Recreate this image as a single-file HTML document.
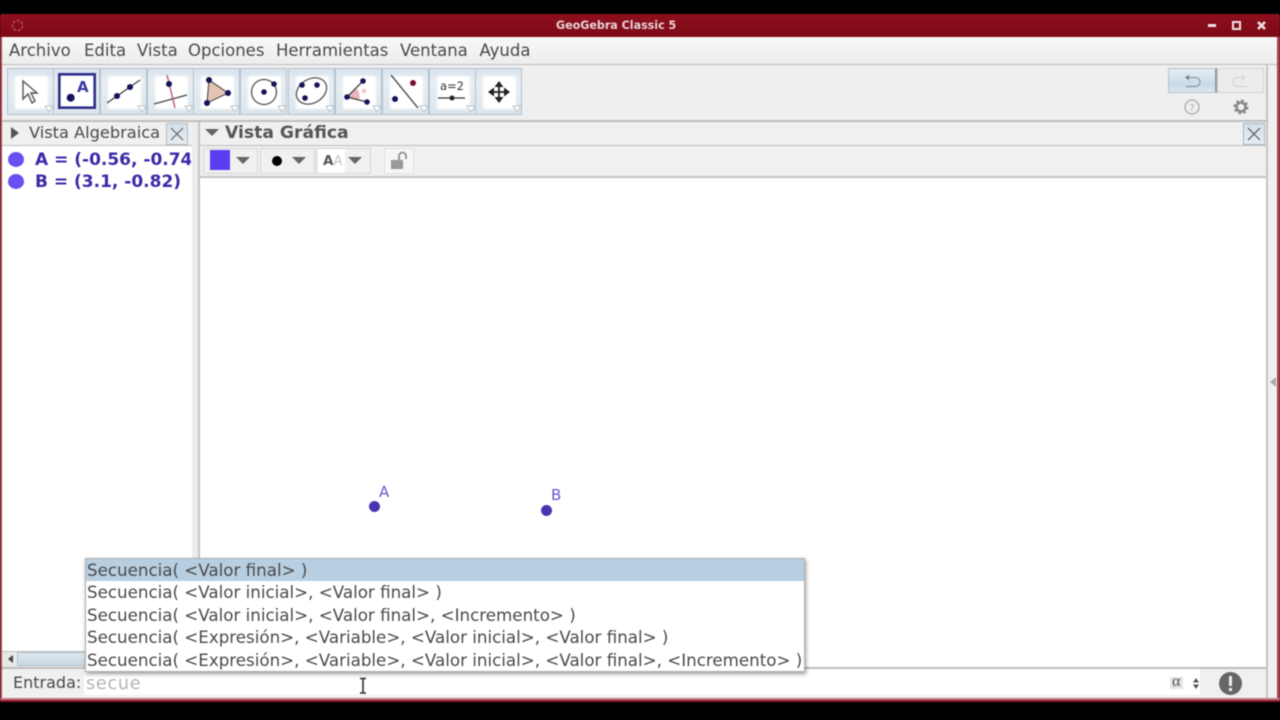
<!DOCTYPE html>
<html><head><meta charset="utf-8"><style>
html,body{margin:0;padding:0;width:1280px;height:720px;overflow:hidden;background:#000}
*{box-sizing:border-box}
#w{position:absolute;left:0;top:0;width:1280px;height:720px;filter:blur(.45px)}
.a{position:absolute}
.t{position:absolute;white-space:pre;font-family:"DejaVu Sans",sans-serif;color:#4a4a4a;line-height:1}
.btn{position:absolute;top:68px;width:47px;height:47px;background:linear-gradient(#d8e3ec,#e8eef3 30%,#dbe5ec);border:1px solid #b4c2cd}
.btn i{position:absolute;left:7px;top:7px;width:33px;height:33px;background:#fff;filter:blur(1px)}
.btn svg{position:absolute;left:0;top:0}
.s{position:absolute;left:87px;font:16.7px "DejaVu Sans",sans-serif;color:#4a4a4a;white-space:pre;line-height:1}
.m{font-size:16.5px;top:43px}
</style></head><body><div id="w">
<div class="a" style="left:0;top:14px;width:1280px;height:688px;background:#efefef;border-radius:3px 3px 0 0;overflow:hidden">
<div class="a" style="left:0;top:0;width:1280px;height:23px;background:linear-gradient(#8e0f1e,#7e0a17)"></div>
</div>
<div class="a" style="left:0;top:37px;width:2px;height:663px;background:#a8434e"></div>
<div class="a" style="left:1277px;top:37px;width:3px;height:663px;background:#a8434e"></div>
<div class="a" style="left:0;top:698px;width:1280px;height:2px;background:#c77a86"></div>
<div class="a" style="left:0;top:700px;width:1280px;height:2px;background:#8a1a2a"></div>
<svg class="a" style="left:10px;top:18px" width="16" height="16"><circle cx="7.500" cy="7.500" r="5" fill="none" stroke="#b45a68" stroke-width="1.3" stroke-dasharray="3 1.5"/></svg>
<div class="t" style="left:556px;top:20px;font-size:11.1px;font-weight:bold;color:#e9d3d5">GeoGebra Classic 5</div>
<div class="a" style="left:1208px;top:24px;width:8px;height:3px;background:#f0e0e2"></div>
<div class="a" style="left:1232px;top:21px;width:9px;height:9px;border:2.5px solid #f0e0e2"></div>
<svg class="a" style="left:1256px;top:20px" width="11" height="11"><path d="M2 2L9 9M9 2L2 9" stroke="#f0e0e2" stroke-width="2.6"/></svg>
<div class="a" style="left:2px;top:37px;width:1275px;height:28px;background:linear-gradient(#f8f8f8,#ededed);border-bottom:1px solid #bcbcbc"></div>
<div class="t m" style="left:9px">Archivo</div>
<div class="t m" style="left:84px">Edita</div>
<div class="t m" style="left:137px">Vista</div>
<div class="t m" style="left:188px">Opciones</div>
<div class="t m" style="left:276px">Herramientas</div>
<div class="t m" style="left:400px">Ventana</div>
<div class="t m" style="left:479.500px">Ayuda</div>

<div class="btn" style="left:7px"><i></i><svg width="47" height="47"><path d="M15 12V30L20 25L24 34L27 32L23 24H29Z" fill="#fff" stroke="#555" stroke-width="1.4"/><path d="M37 37h8l-4 6z" fill="#fff" stroke="#b8c4cc"/></svg></div>
<div class="btn" style="left:53px"><i></i><svg width="47" height="47"><rect x="5.300" y="5.300" width="35.400" height="33.400" fill="#fff" stroke="#2e2e8c" stroke-width="2.600"/><circle cx="16.700" cy="28.700" r="4" fill="#14145a"/><text x="23" y="23" font-family="DejaVu Sans" font-size="15" font-weight="bold" fill="#3a3aa0">A</text></svg></div>
<div class="btn" style="left:100px"><i></i><svg width="47" height="47"><path d="M6 34L39 11" stroke="#444" stroke-width="1.3"/><circle cx="16" cy="27" r="3" fill="#14145a"/><circle cx="29" cy="18" r="3" fill="#14145a"/><path d="M37 37h8l-4 6z" fill="#fff" stroke="#b8c4cc"/></svg></div>
<div class="btn" style="left:147px"><i></i><svg width="47" height="47"><path d="M6 35L39 26" stroke="#444" stroke-width="1.2"/><path d="M19 6L27 39" stroke="#c05a68" stroke-width="1.4"/><circle cx="21" cy="15" r="3" fill="#14145a"/><path d="M37 37h8l-4 6z" fill="#fff" stroke="#b8c4cc"/></svg></div>
<div class="btn" style="left:193px"><i></i><svg width="47" height="47"><path d="M15 11L13 34L34 24Z" fill="#e6c4b4" stroke="#555" stroke-width="1.2"/><circle cx="15" cy="11" r="3" fill="#14145a"/><circle cx="13" cy="34" r="3" fill="#14145a"/><circle cx="34" cy="24" r="3" fill="#14145a"/><path d="M37 37h8l-4 6z" fill="#fff" stroke="#b8c4cc"/></svg></div>
<div class="btn" style="left:240px"><i></i><svg width="47" height="47"><circle cx="23" cy="23" r="12.500" fill="none" stroke="#555" stroke-width="1.3"/><circle cx="23" cy="23" r="2.800" fill="#14145a"/><circle cx="33" cy="15" r="2.800" fill="#14145a"/><path d="M37 37h8l-4 6z" fill="#fff" stroke="#b8c4cc"/></svg></div>
<div class="btn" style="left:288px"><i></i><svg width="47" height="47"><ellipse cx="22.500" cy="22" rx="16" ry="12" transform="rotate(-30 22.500 22)" fill="none" stroke="#555" stroke-width="1.3"/><circle cx="13" cy="16" r="2.800" fill="#14145a"/><circle cx="28" cy="16" r="2.800" fill="#14145a"/><circle cx="16" cy="29" r="2.800" fill="#14145a"/><path d="M37 37h8l-4 6z" fill="#fff" stroke="#b8c4cc"/></svg></div>
<div class="btn" style="left:335px"><i></i><svg width="47" height="47"><path d="M11 28L20 19A11 11 0 0 1 23 31Z" fill="#eeb4bc"/><path d="M27 12L11 28L31 33" fill="none" stroke="#444" stroke-width="1.3"/><circle cx="27" cy="12" r="2.800" fill="#14145a"/><circle cx="11" cy="28" r="2.800" fill="#14145a"/><circle cx="31" cy="33" r="2.800" fill="#14145a"/><circle cx="28" cy="22" r="2.400" fill="#f4c8ce"/><path d="M37 37h8l-4 6z" fill="#fff" stroke="#b8c4cc"/></svg></div>
<div class="btn" style="left:382px"><i></i><svg width="47" height="47"><path d="M8 6L35 39" stroke="#555" stroke-width="1.400"/><circle cx="30" cy="14" r="3" fill="#7a1030"/><circle cx="12" cy="30" r="3" fill="#14145a"/><path d="M37 37h8l-4 6z" fill="#fff" stroke="#b8c4cc"/></svg></div>
<div class="btn" style="left:429px"><i></i><svg width="47" height="47"><text x="10" y="21" font-family="DejaVu Sans" font-size="11.500" fill="#333">a=2</text><path d="M8 29H35" stroke="#333" stroke-width="1.200"/><circle cx="22" cy="29" r="2.500" fill="#222"/><path d="M37 37h8l-4 6z" fill="#fff" stroke="#b8c4cc"/></svg></div>
<div class="btn" style="left:475px"><i></i><svg width="47" height="47"><path d="M23 17V29M17 23H29" stroke="#222" stroke-width="1.800"/><path d="M23 12l-4.500 6h9zM23 34l-4.500-6h9zM12 23l6-4.500v9zM34 23l-6-4.500v9z" fill="#222"/><path d="M37 37h8l-4 6z" fill="#fff" stroke="#b8c4cc"/></svg></div>

<div class="a" style="left:1168px;top:68px;width:49px;height:25px;background:linear-gradient(#e4edf4,#c9dbe8 70%,#dbe7ef);border:1px solid #b4c2cd;border-right:2px solid #8a9aa6"></div>
<div class="a" style="left:1217px;top:68px;width:47px;height:25px;background:#ececec;border:1px solid #d4d4d4"></div>
<svg class="a" style="left:1180px;top:72px" width="80" height="18"><path d="M7 5.500H15.500A4.500 4.500 0 0 1 15.500 14.500H6" fill="none" stroke="#8a96a0" stroke-width="1.200"/><path d="M9 2.500L5 5.500L9 8.500Z" fill="#7a868f"/><path d="M63 5.500H57.500A4.500 4.500 0 0 0 57.500 14.500H67" fill="none" stroke="#d4d4d4" stroke-width="1.200"/><path d="M62 2.500L66 5.500L62 8.500Z" fill="#d8d8d8"/></svg>
<svg class="a" style="left:1182px;top:97px" width="20" height="20"><circle cx="10" cy="10" r="7" fill="none" stroke="#aaa" stroke-width="1.300"/><text x="10" y="14" text-anchor="middle" font-family="DejaVu Sans" font-size="10" fill="#aaa">?</text></svg>
<svg class="a" style="left:1232px;top:98px" width="18" height="18"><circle cx="9" cy="9" r="4.500" fill="none" stroke="#888" stroke-width="2.500"/><circle cx="9" cy="9" r="6.500" fill="none" stroke="#888" stroke-width="2" stroke-dasharray="2.500 2.600"/></svg>

<div class="a" style="left:2px;top:120px;width:1275px;height:2px;background:#bdbdbd"></div>
<div class="a" style="left:1266px;top:65px;width:2px;height:633px;background:#c4c4c4"></div>
<div class="a" style="left:2px;top:122px;width:190px;height:24px;background:#f0f0f0;border-bottom:1px solid #c0c0c0"></div>
<div class="a" style="left:2px;top:146px;width:190px;height:521px;background:#fff"></div>
<div class="a" style="left:192px;top:122px;width:7px;height:545px;background:#ececec"></div>
<div class="a" style="left:198px;top:122px;width:2px;height:545px;background:#c4c4c4"></div>
<div class="a" style="left:11px;top:127px;width:0;height:0;border-left:8px solid #555;border-top:6px solid transparent;border-bottom:6px solid transparent"></div>
<div class="t" style="left:29px;top:125px;font-size:16.200px">Vista Algebraica</div>
<div class="a" style="left:166px;top:123px;width:22px;height:22px;background:linear-gradient(#d4e0ea,#e6edf2);border:1px solid #b0bcc6"></div>
<svg class="a" style="left:166px;top:123px" width="22" height="22"><path d="M5 5L17 17M17 5L5 17" stroke="#666" stroke-width="1.200"/></svg>
<div class="a" style="left:8px;top:152px;width:16px;height:15px;border-radius:50%;background:#6a4ff0"></div>
<div class="a" style="left:8px;top:174px;width:16px;height:15px;border-radius:50%;background:#6a4ff0"></div>
<div class="a" style="left:2px;top:146px;width:189px;height:60px;overflow:hidden">
<div class="t" style="left:33px;top:6px;font-size:17px;font-weight:bold;color:#3a2aa8">A = (-0.56, -0.74)</div>
<div class="t" style="left:33px;top:28px;font-size:17px;font-weight:bold;color:#3a2aa8">B = (3.1, -0.82)</div>
</div>

<div class="a" style="left:200px;top:122px;width:1066px;height:24px;background:#f0f0f0;border-bottom:1px solid #bcbcbc"></div>
<div class="a" style="left:205px;top:129px;width:0;height:0;border-top:7px solid #666;border-left:7px solid transparent;border-right:7px solid transparent"></div>
<div class="t" style="left:225px;top:125px;font-size:17.200px;font-weight:bold;color:#555">Vista Gráfica</div>
<div class="a" style="left:1243px;top:123px;width:22px;height:22px;background:linear-gradient(#d4e0ea,#e6edf2);border:1px solid #a8b6c2"></div>
<svg class="a" style="left:1243px;top:123px" width="22" height="22"><path d="M5 5L17 17M17 5L5 17" stroke="#555" stroke-width="1.200"/></svg>

<div class="a" style="left:200px;top:146px;width:1066px;height:32px;background:#f0f0f0;border-bottom:2px solid #c4c4c4"></div>
<div class="a" style="left:203px;top:148px;width:55px;height:26px;border:1px solid #d6d6d6"></div>
<div class="a" style="left:260px;top:148px;width:55px;height:26px;border:1px solid #d6d6d6"></div>
<div class="a" style="left:316px;top:148px;width:55px;height:26px;border:1px solid #d6d6d6"></div>
<div class="a" style="left:384px;top:148px;width:30px;height:26px;border:1px solid #e0e0e0;background:#f6f6f6"></div>
<div class="a" style="left:210px;top:150px;width:20px;height:20px;background:#5a3df0"></div>
<div class="a" style="left:236px;top:157px;width:0;height:0;border-top:7px solid #666;border-left:7px solid transparent;border-right:7px solid transparent"></div>
<div class="a" style="left:272px;top:156px;width:10px;height:10px;border-radius:50%;background:#000"></div>
<div class="a" style="left:292px;top:157px;width:0;height:0;border-top:7px solid #666;border-left:7px solid transparent;border-right:7px solid transparent"></div>
<div class="a" style="left:318px;top:149px;width:27px;height:24px;background:#fff"></div>
<div class="t" style="left:323px;top:155px;font-size:13.500px;font-weight:bold;color:#555">A<span style="font-size:13px;color:#c4c4c4;font-weight:normal">A</span></div>
<div class="a" style="left:348px;top:157px;width:0;height:0;border-top:7px solid #666;border-left:7px solid transparent;border-right:7px solid transparent"></div>
<svg class="a" style="left:390px;top:151px" width="20" height="20"><rect x="1" y="9" width="12" height="9" fill="#999"/><path d="M9 9V5A3.500 3.500 0 0 1 16 5V8" fill="none" stroke="#999" stroke-width="2"/></svg>

<div class="a" style="left:200px;top:178px;width:1066px;height:489px;background:#fff"></div>
<div class="a" style="left:1268px;top:65px;width:9px;height:633px;background:#f0f0f0"></div>
<div class="a" style="left:1270px;top:377px;width:0;height:0;border-right:6px solid #aaa;border-top:5px solid transparent;border-bottom:5px solid transparent"></div>
<div class="a" style="left:369px;top:501px;width:11px;height:11px;border-radius:50%;background:#4a33b4"></div>
<div class="a" style="left:541px;top:505px;width:11px;height:11px;border-radius:50%;background:#4a33b4"></div>
<div class="t" style="left:379px;top:485px;font-size:15px;color:#6a55cc">A</div>
<div class="t" style="left:551px;top:488px;font-size:15px;color:#6a55cc">B</div>

<div class="a" style="left:2px;top:651px;width:190px;height:16px;background:#e8e8e8;border-top:1px solid #c0c0c0"></div>
<div class="a" style="left:17px;top:652px;width:70px;height:14px;background:linear-gradient(#dde8f0,#c8d8e4);border:1px solid #b4c0ca"></div>
<div class="a" style="left:8px;top:655px;width:0;height:0;border-right:5px solid #444;border-top:4px solid transparent;border-bottom:4px solid transparent"></div>
<div class="a" style="left:2px;top:667px;width:1264px;height:2px;background:#bcbcbc"></div>
<div class="a" style="left:2px;top:669px;width:1264px;height:29px;background:#f0f0f0"></div>
<div class="a" style="left:84px;top:669px;width:1116px;height:26px;background:#fff"></div>
<div class="t" style="left:13px;top:675px;font-size:16px">Entrada:</div>
<div class="t" style="left:86px;top:676px;font-size:17.500px;letter-spacing:.8px;color:#b4b4b4">secue</div>
<svg class="a" style="left:358px;top:677px" width="10" height="18"><path d="M2 1.500H8M5 1.500V16M2 16H8" stroke="#444" stroke-width="1.800" fill="none"/></svg>
<div class="a" style="left:1170px;top:677px;width:13px;height:12px;background:#e4e4e4"></div>
<div class="t" style="left:1172px;top:674px;font-size:16px;font-family:'Liberation Serif',serif;color:#555">α</div>
<svg class="a" style="left:1191px;top:677px" width="9" height="13"><path d="M5 1L8 5.500H2zM5 12L8 7.500H2z" fill="#555"/></svg>
<div class="a" style="left:1219px;top:672px;width:23px;height:23px;border-radius:50%;background:#666"></div>
<div class="a" style="left:1229px;top:676px;width:3px;height:10px;background:#eee"></div>
<div class="a" style="left:1229px;top:688px;width:3px;height:3px;background:#eee"></div>

<div class="a" style="left:85px;top:558px;width:720px;height:114px;background:#fff;border:1px solid #b0b0b0;box-shadow:1px 2px 4px rgba(0,0,0,.4)"></div>
<div class="a" style="left:86px;top:559px;width:718px;height:22px;background:#b8cfe2"></div>
<div class="s" style="top:562px">Secuencia( &lt;Valor final&gt; )</div>
<div class="s" style="top:584px">Secuencia( &lt;Valor inicial&gt;, &lt;Valor final&gt; )</div>
<div class="s" style="top:607px">Secuencia( &lt;Valor inicial&gt;, &lt;Valor final&gt;, &lt;Incremento&gt; )</div>
<div class="s" style="top:629px">Secuencia( &lt;Expresión&gt;, &lt;Variable&gt;, &lt;Valor inicial&gt;, &lt;Valor final&gt; )</div>
<div class="s" style="top:652px">Secuencia( &lt;Expresión&gt;, &lt;Variable&gt;, &lt;Valor inicial&gt;, &lt;Valor final&gt;, &lt;Incremento&gt; )</div>
</div></body></html>
